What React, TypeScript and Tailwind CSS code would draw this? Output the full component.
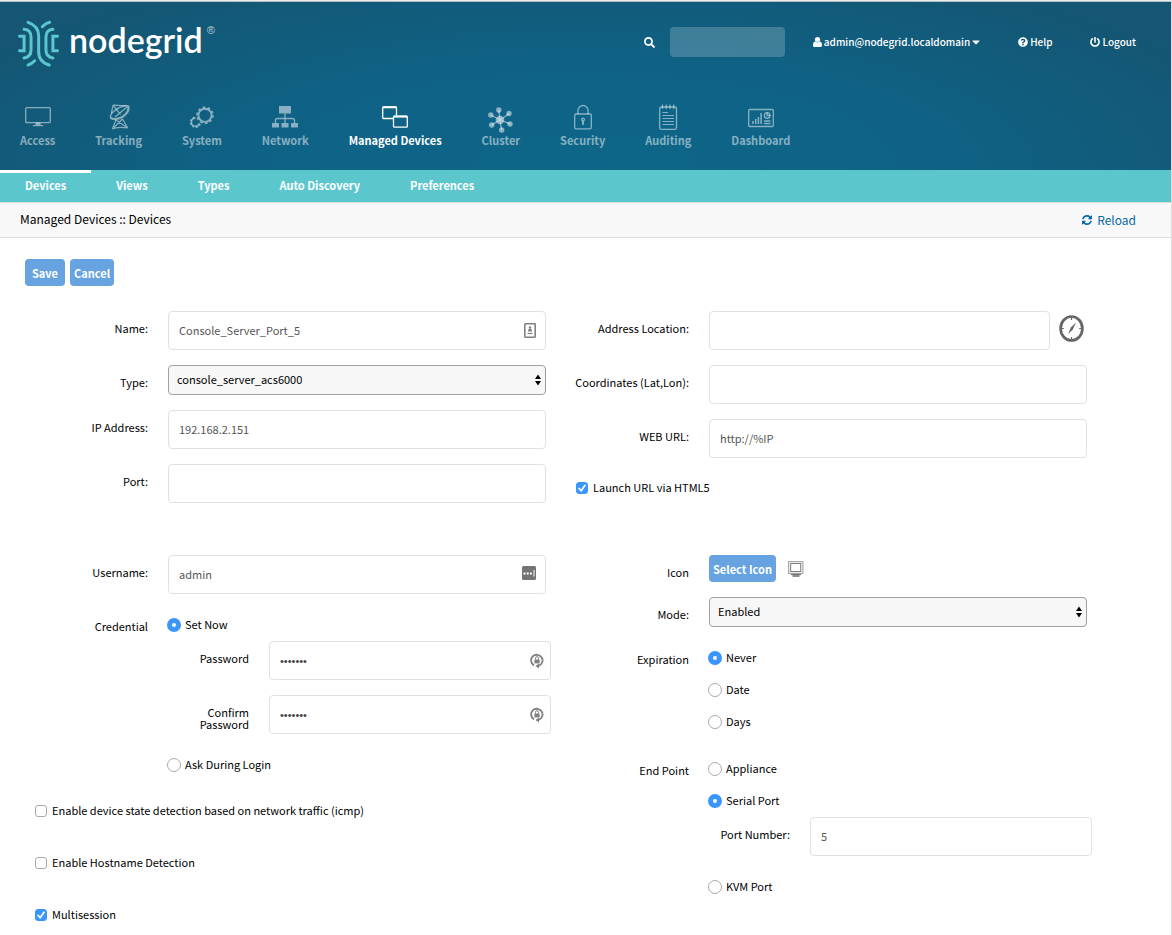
import type { InputHTMLAttributes, ReactNode } from 'react';
import { FaCaretDown, FaPowerOff, FaQuestionCircle, FaSearch } from 'react-icons/fa';

/* ---------- icons ---------- */

function LogoMark() {
  return (
    <svg viewBox="54 60 123 142" className="h-[47px] w-[41px]" fill="none" stroke="#5cc6cd" strokeWidth="9" strokeLinecap="round" aria-hidden="true">
      <path d="M58 109H72V153H58" />
      <path d="M173 109H159V153H173" />
      <path d="M72 88C86 89 93 98 93 112V150C93 165 86 173 72 175" />
      <path d="M159 88C145 89 138 98 138 112V150C138 165 145 173 159 175" />
      <path d="M84 67C105 74 116 88 116 108V155C116 176 127 190 148 196" />
      <path d="M127 80C133 74 140 69 149 67" />
      <path d="M104 183C98 189 92 194 84 196" />
    </svg>
  );
}

function NavIcon({ children }: { children: ReactNode }) {
  return (
    <svg viewBox="0 0 26 26" className="size-[26px] overflow-visible" fill="none" stroke="currentColor" strokeWidth="1.3" aria-hidden="true">
      {children}
    </svg>
  );
}

const accessIcon = (
  <NavIcon>
    <rect x=".7" y="3.6" width="24.6" height="15" rx="1.2" />
    <path d="M10.8 18.6h4.4l.6 2.4h2.4v1.2H7.8V21h2.4z" fill="currentColor" stroke="none" />
  </NavIcon>
);

const trackingIcon = (
  <NavIcon>
    <g transform="translate(3 0)">
      <path d="M19.300 1.800C21 9 11 18 1.500 14" strokeWidth="2.200" />
      <path d="M19.300 1.800C13 1 0 8 1.500 14" />
      <path d="M4 1.200L2.300 9.500M4 1.200L17.500 1.800M4 1.200L11.500 10.500M18 3L6 13" strokeWidth="1.200" />
      <path d="M7 16L3.500 24.500M13.500 15l5 8.500M7 16l11 7.500M13.500 15L5 23.500M3.200 25c4-2 10-2 15.600-1" strokeWidth="1.200" />
    </g>
  </NavIcon>
);

const systemIcon = (
  <NavIcon>
    <circle cx="16" cy="11.300" r="6.600" strokeWidth="1.900" />
    <circle cx="16" cy="11.300" r="8.100" strokeWidth="1.500" strokeDasharray="2.600 2.490" />
    <path d="M6.600 14.200A4 4 0 1 0 10.300 19.200" strokeWidth="1.500" />
    <path d="M5.500 13.200A5.200 5.200 0 1 0 11.600 19.600" strokeWidth="1.300" strokeDasharray="1.900 1.900" />
  </NavIcon>
);

const networkIcon = (
  <NavIcon>
    <g fill="currentColor" stroke="none">
      <rect x="7" y="2" width="12" height="7.500" />
      <rect x="0" y="19" width="7" height="4.500" />
      <rect x="9.500" y="19" width="7" height="4.500" />
      <rect x="19" y="19" width="7" height="4.500" />
    </g>
    <path d="M13 9.500V19M3.500 19v-2.500q0-2 2-2h15q2 0 2 2V19" />
  </NavIcon>
);

const managedIcon = (
  <NavIcon>
    <path d="M11 14.500H1.500Q.7 14.500.7 13.500V4Q.7 3 1.500 3H13.500Q14.500 3 14.500 4V11" />
    <path d="M.7 3.300H14.500" strokeWidth="2" />
    <rect x="11.500" y="12.200" width="13.800" height="11" rx="1" />
    <path d="M11.500 12.600H25.300" strokeWidth="2" />
  </NavIcon>
);

const clusterIcon = (
  <NavIcon>
    <path d="M12 16L10.800 6M12 16l9.500-6.500M12 16l10.500 4M12 16l1.500 10M12 16l-8.500 5M12 16l-9-5" />
    <g fill="currentColor" stroke="none">
      <circle cx="12" cy="16" r="4.300" />
      <circle cx="10.800" cy="6" r="2.700" />
      <circle cx="21" cy="9.500" r="2.700" />
      <circle cx="22" cy="20" r="2.700" />
      <circle cx="13.700" cy="26" r="2.700" />
      <circle cx="3.700" cy="21" r="2.700" />
      <circle cx="2.800" cy="11" r="2.700" />
    </g>
  </NavIcon>
);

const securityIcon = (
  <NavIcon>
    <rect x="4.700" y="10" width="16.600" height="14.800" rx="1.300" />
    <path d="M8 10V6.500a5 5 0 0 1 10 0V10" />
    <circle cx="13" cy="15.500" r="1.400" />
    <path d="M13 17v4" strokeWidth="1.800" />
  </NavIcon>
);

const auditingIcon = (
  <NavIcon>
    <rect x="4.700" y="3" width="16.800" height="22.300" rx="1.500" />
    <path d="M7.500.5V5M11.200.5V5M15 .5V5M18.700.5V5" strokeWidth="1.200" />
    <path d="M7.500 8.500H13M7.500 11.500H19M7.500 14.500H19M7.500 17.500H19M7.500 20.500H19" strokeWidth="1.200" />
  </NavIcon>
);

const dashboardIcon = (
  <NavIcon>
    <rect x=".7" y="5.500" width="24.600" height="17" rx="1" />
    <path d="M5 20v-3M7.700 20v-5M10.400 20v-7M13.100 20V9" strokeWidth="1.500" />
    <circle cx="19.200" cy="11.500" r="2.800" />
    <path d="M19.200 8.500v3h3M16 17h6.500M16 19.500h6.500" />
  </NavIcon>
);

function UserIcon() {
  return (
    <svg viewBox="0 128 1280 1536" className="h-[10px] w-[9px]" fill="currentColor" preserveAspectRatio="none" aria-hidden="true">
      <path d="M1280 1399q0 109-62.500 187t-150.500 78H213q-88 0-150.500-78T0 1399q0-85 8.500-160.500t31.500-152 58.500-131 94-89T327 832q131 128 313 128t313-128q76 0 134.500 34.500t94 89 58.500 131 31.500 152 8.500 160.500zm-256-887q0 159-112.500 271.500T640 896 368.500 783.500 256 512t112.500-271.500T640 128t271.500 112.500T1024 512z" />
    </svg>
  );
}

function ReloadIcon() {
  return (
    <svg viewBox="128 128 1536 1536" className="size-[10px]" fill="currentColor" aria-hidden="true">
      <path d="M1639 1056q0 5-1 7-64 268-268 434.500t-478 166.500q-146 0-282.500-55t-243.500-157l-129 129q-19 19-45 19t-45-19-19-45v-448q0-26 19-45t45-19h448q26 0 45 19t19 45-19 45l-137 137q71 66 161 102t187 36q134 0 250-65t186-179q11-17 53-117 8-23 30-23h192q13 0 22.500 9.500t9.500 22.500zm25-800v448q0 26-19 45t-45 19h-448q-26 0-45-19t-19-45 19-45l138-138q-148-137-349-137-134 0-250 65t-186 179q-11 17-53 117-8 23-30 23h-199q-13 0-22.500-9.500t-9.500-22.500v-7q65-268 270-434.500t480-166.500q146 0 284 55.500t245 156.500l130-129q19-19 45-19t45 19 19 45z" />
    </svg>
  );
}

function CompassIcon() {
  return (
    <svg viewBox="0 0 25 27" className="h-[27px] w-[25px]" fill="none" stroke="#666" aria-hidden="true">
      <ellipse cx="12.500" cy="13.500" rx="10.900" ry="12" strokeWidth="2.700" />
      <path d="M12.500 2.500v2.500M12.500 22v2.500M2.500 13.500h2.300M20.200 13.500h2.300" strokeWidth="1.200" />
      <path d="M17 7.500L13.700 14.700 9.200 19l2.600-6.500z" fill="#666" stroke="none" />
    </svg>
  );
}

const contactIcon = (
  <svg viewBox="0 0 12 15" className="h-[15px] w-[12px]" fill="none" stroke="#808080" aria-hidden="true">
    <rect x=".8" y=".8" width="10.400" height="13.400" rx=".6" strokeWidth="1.600" />
    <circle cx="6" cy="4.500" r="1.200" fill="#808080" stroke="none" />
    <path d="M4 8.500q0-3 2-3t2 3z" fill="#808080" stroke="none" />
    <path d="M3.500 10.500h5" strokeWidth="1.200" />
  </svg>
);

const dotsIcon = (
  <svg viewBox="0 0 14 14" className="mb-[3px] size-[14px]" aria-hidden="true">
    <rect width="14" height="14" rx="1.500" fill="#747474" />
    <g fill="#fff">
      <rect x="1.500" y="6.500" width="2" height="2" />
      <rect x="4.700" y="6.500" width="2" height="2" />
      <rect x="7.900" y="6.500" width="2" height="2" />
      <rect x="11.500" y="4" width="1" height="6.500" />
    </g>
  </svg>
);

const lockIcon = (
  <svg viewBox="0 0 14 16" className="-mr-[3px] h-[16px] w-[14px]" fill="none" stroke="#808080" aria-hidden="true">
    <path d="M4 12.400A5.700 5.700 0 1 1 8.500 12.900" strokeWidth="1.800" />
    <path d="M9 10.500v5L5.500 13z" fill="#808080" stroke="none" />
    <rect x="4.400" y="6.500" width="5.200" height="3.900" fill="#808080" stroke="none" />
    <path d="M5.500 6.500V5.200a1.500 1.500 0 0 1 3 0v1.300" />
  </svg>
);

function MonitorIcon() {
  return (
    <svg viewBox="0 0 16 16" className="size-4" fill="none" aria-hidden="true">
      <rect x=".6" y=".6" width="14.300" height="11.800" fill="#f0f0f0" stroke="#a0a0a0" />
      <rect x="2.700" y="2.500" width="10" height="8" fill="#fff" stroke="#808080" />
      <path d="M5 12.500h6l.5 1.500h-7z" fill="#aaa" />
      <path d="M3 13.500h10" stroke="#777" strokeWidth="1.200" />
      <path d="M4.500 15h7" stroke="#444" strokeWidth="1.200" />
    </svg>
  );
}

/* ---------- form parts ---------- */

function Field({ label, htmlFor, id, children }: { label: string; htmlFor?: string; id?: string; children: ReactNode }) {
  const cls = 'w-32 shrink-0 pt-[11px] text-right';
  return (
    <div className="flex items-start gap-5">
      {htmlFor ? (
        <label htmlFor={htmlFor} className={cls}>{label}</label>
      ) : (
        <span id={id} className={cls}>{label}</span>
      )}
      <div className="min-w-0 flex-1">{children}</div>
    </div>
  );
}

function SubField({ label, htmlFor, children }: { label: ReactNode; htmlFor: string; children: ReactNode }) {
  return (
    <div className="-mr-[5px] mb-[15px] flex items-start gap-5">
      <label htmlFor={htmlFor} className="w-[81px] shrink-0 pt-[11px] text-right">{label}</label>
      <div className="min-w-0 flex-1">{children}</div>
    </div>
  );
}

function TextBox({ icon, type = 'text', ...rest }: InputHTMLAttributes<HTMLInputElement> & { icon?: ReactNode }) {
  return (
    <div className="relative">
      <input
        type={type}
        className={
          type === 'password'
            ? "block h-[39px] w-full rounded-[4px] border border-[#e1e1e1] bg-white px-2.5 font-['Liberation_Sans',sans-serif] text-[11px] text-[#444] outline-none"
            : 'block h-[39px] w-full rounded-[4px] border border-[#e1e1e1] bg-white px-2.5 pb-0.5 text-[11px] text-[#555] outline-none'
        }
        {...rest}
      />
      {icon && <span className="pointer-events-none absolute inset-y-0 right-2.5 flex items-center">{icon}</span>}
    </div>
  );
}

function SelectBox({ id, options }: { id: string; options: string[] }) {
  return (
    <div className="relative">
      <select id={id} className="block h-[30px] w-full appearance-none rounded-[4px] border border-[#a0a0a0] bg-[#f7f7f7] px-2 pb-0.5 text-[11px] leading-[20px] text-black outline-none">
        {options.map((o) => (
          <option key={o}>{o}</option>
        ))}
      </select>
      <span className="pointer-events-none absolute inset-y-0 right-[5px] flex items-center">
        <svg viewBox="0 0 6 12" className="h-3 w-1.5" fill="#000" aria-hidden="true">
          <path d="M3 .5L6 5H0zM3 11.500L0 7h6z" />
        </svg>
      </span>
    </div>
  );
}

function Radio({ name, label, checked }: { name: string; label: string; checked?: boolean }) {
  return (
    <label className="-ml-px flex h-8 items-center gap-1">
      <input
        type="radio"
        name={name}
        defaultChecked={checked}
        className="size-3.5 appearance-none rounded-full border border-[#a9a9a9] bg-white checked:border-[5px] checked:border-[#3b96fb]"
      />
      <span className="pb-0.5">{label}</span>
    </label>
  );
}

function Check({ label, checked }: { label: string; checked?: boolean }) {
  return (
    <label className="ml-[15px] flex h-[30px] items-center gap-[5px]">
      <span className="relative flex">
        <input
          type="checkbox"
          defaultChecked={checked}
          className="peer size-3 appearance-none rounded-[3px] border border-[#a9a9a9] bg-white checked:border-[#3b96fb] checked:bg-[#3b96fb]"
        />
        <svg viewBox="0 0 12 12" className="pointer-events-none absolute inset-0 hidden size-3 peer-checked:block" fill="none" stroke="#fff" strokeWidth="1.700" strokeLinecap="round" aria-hidden="true">
          <path d="M3 6.500L5.200 8.700 9 3.300" />
        </svg>
      </span>
      <span className="pb-0.5">{label}</span>
    </label>
  );
}

function ActionButton({ id, children }: { id?: string; children: ReactNode }) {
  return (
    <button id={id} type="button" className="h-[27px] min-w-10 rounded-[4px] bg-[#66a3e0] px-1 text-[11px] font-bold text-white">
      {children}
    </button>
  );
}

/* ---------- page ---------- */

const navItems = [
  { label: 'Access', icon: accessIcon },
  { label: 'Tracking', icon: trackingIcon },
  { label: 'System', icon: systemIcon },
  { label: 'Network', icon: networkIcon },
  { label: 'Managed Devices', icon: managedIcon, active: true },
  { label: 'Cluster', icon: clusterIcon },
  { label: 'Security', icon: securityIcon },
  { label: 'Auditing', icon: auditingIcon },
  { label: 'Dashboard', icon: dashboardIcon },
];

const tabs = ['Devices', 'Views', 'Types', 'Auto Discovery', 'Preferences'];

export default function App() {
  return (
    <div className="min-h-screen border-r border-[#dcdcdc] bg-white font-['Noto_Sans_CJK_SC',sans-serif] text-[11px] leading-[12px] text-black">
      <div className="h-0.5 border-b border-[#b4bdc2] bg-[#ececec]" />

      <header className="bg-[radial-gradient(ellipse_60%_130%_at_50%_100%,#0d6689_0%,#0f6285_50%,#145673_100%)]">
        <div className="flex h-20 items-center pr-[35px] pl-[18px] text-[10px] font-medium text-white">
          <a href="#home" className="flex items-center gap-2.5 pt-[3px]">
            <LogoMark />
            <span className="flex items-start pb-2">
              <span className="font-['Lato',sans-serif] text-[34px] leading-[44px] font-semibold">nodegrid</span>
              <span className="pt-1.5 pl-1 font-['Liberation_Sans',sans-serif] text-[11px] font-normal text-white/70">®</span>
            </span>
          </a>
          <div className="ml-auto flex items-center gap-[38px]">
            <div className="flex items-center gap-[15px]">
              <label htmlFor="search" aria-label="Search">
                <FaSearch className="size-[11px]" />
              </label>
              <input id="search" type="text" className="h-[30px] w-[115px] rounded-[4px] bg-white/20 px-2 outline-none" />
            </div>
            <a href="#account" className="-ml-2.5 flex items-center gap-0.5">
              <UserIcon />
              admin@nodegrid.localdomain
              <FaCaretDown className="h-3 w-2" />
            </a>
            <a href="#help" className="flex items-center gap-0.5">
              <FaQuestionCircle className="size-[10px]" />
              Help
            </a>
            <a href="#logout" className="flex items-center gap-0.5">
              <FaPowerOff className="size-[10px]" />
              Logout
            </a>
          </div>
        </div>

        <nav className="flex gap-10 px-5 pt-[22px] pb-[23px] text-[11px] leading-[14px] font-bold whitespace-nowrap">
          {navItems.map((item) => (
            <a
              key={item.label}
              href={'#' + item.label}
              className={item.active ? 'flex flex-col items-center gap-[3px] text-white' : 'flex flex-col items-center gap-[3px] text-white/50'}
            >
              {item.icon}
              {item.label}
            </a>
          ))}
        </nav>
      </header>

      <nav className="flex h-8 bg-[#5cc6cd] text-[11px] font-bold text-white">
        {tabs.map((t, i) => (
          <a
            key={t}
            href={'#' + t}
            className={i === 0 ? 'flex items-center border-t-[3px] border-white px-[25px] pb-1.5' : 'flex items-center border-t-[3px] border-transparent px-[25px] pb-1.5'}
          >
            {t}
          </a>
        ))}
      </nav>

      <div className="flex h-9 items-center justify-between border-y border-[#dcdcdc] bg-[#f8f8f8] pr-[35px] pl-5 text-[12px]">
        <h1 className="pb-0.5">Managed Devices :: Devices</h1>
        <a href="#reload" className="flex items-center gap-[5px] text-[#0668a3]">
          <ReloadIcon />
          Reload
        </a>
      </div>

      <form>
        <div className="flex gap-[5px] pt-[21px] pl-[25px]">
          <ActionButton>Save</ActionButton>
          <ActionButton>Cancel</ActionButton>
        </div>

        <div className="grid grid-cols-2 gap-x-[15px] gap-y-[52px] pt-[25px] pr-21 pb-4 pl-5">
          <section className="flex flex-col gap-[15px]">
            <Field label="Name:" htmlFor="name">
              <TextBox id="name" defaultValue="Console_Server_Port_5" icon={contactIcon} />
            </Field>
            <Field label="Type:" htmlFor="type">
              <SelectBox id="type" options={['console_server_acs6000']} />
            </Field>
            <Field label="IP Address:" htmlFor="ip">
              <TextBox id="ip" defaultValue="192.168.2.151" />
            </Field>
            <Field label="Port:" htmlFor="port">
              <TextBox id="port" />
            </Field>
          </section>

          <section className="flex flex-col gap-[15px]">
            <Field label="Address Location:" htmlFor="address">
              <div className="flex items-start gap-[9px] pr-[3px]">
                <div className="min-w-0 flex-1">
                  <TextBox id="address" />
                </div>
                <button type="button" aria-label="Locate" className="pt-1">
                  <CompassIcon />
                </button>
              </div>
            </Field>
            <Field label="Coordinates (Lat,Lon):" htmlFor="coords">
              <TextBox id="coords" />
            </Field>
            <Field label="WEB URL:" htmlFor="url">
              <TextBox id="url" defaultValue="http://%IP" />
            </Field>
            <Check label="Launch URL via HTML5" checked />
          </section>

          <section className="flex flex-col gap-[15px]">
            <Field label="Username:" htmlFor="user">
              <TextBox id="user" defaultValue="admin" icon={dotsIcon} />
            </Field>
            <Field label="Credential" id="credential">
              <div role="radiogroup" aria-labelledby="credential">
                <Radio name="credential" label="Set Now" checked />
                <SubField label="Password" htmlFor="pw">
                  <TextBox id="pw" type="password" defaultValue="1234567" icon={lockIcon} />
                </SubField>
                <SubField label="Confirm Password" htmlFor="pw2">
                  <TextBox id="pw2" type="password" defaultValue="1234567" icon={lockIcon} />
                </SubField>
                <Radio name="credential" label="Ask During Login" />
              </div>
            </Field>
            <div className="flex flex-col gap-[22px]">
              <Check label="Enable device state detection based on network traffic (icmp)" />
              <Check label="Enable Hostname Detection" />
              <Check label="Multisession" checked />
            </div>
          </section>

          <section className="flex flex-col gap-[15px]">
            <Field label="Icon" htmlFor="icon">
              <div className="flex items-center gap-3">
                <ActionButton id="icon">Select Icon</ActionButton>
                <MonitorIcon />
              </div>
            </Field>
            <Field label="Mode:" htmlFor="mode">
              <SelectBox id="mode" options={['Enabled']} />
            </Field>
            <Field label="Expiration" id="expiration">
              <div role="radiogroup" aria-labelledby="expiration">
                <Radio name="expiration" label="Never" checked />
                <Radio name="expiration" label="Date" />
                <Radio name="expiration" label="Days" />
              </div>
            </Field>
            <Field label="End Point" id="endpoint">
              <div role="radiogroup" aria-labelledby="endpoint">
                <Radio name="endpoint" label="Appliance" />
                <Radio name="endpoint" label="Serial Port" checked />
                <SubField label="Port Number:" htmlFor="portnum">
                  <TextBox id="portnum" defaultValue="5" />
                </SubField>
                <Radio name="endpoint" label="KVM Port" />
              </div>
            </Field>
          </section>
        </div>
      </form>
    </div>
  );
}
